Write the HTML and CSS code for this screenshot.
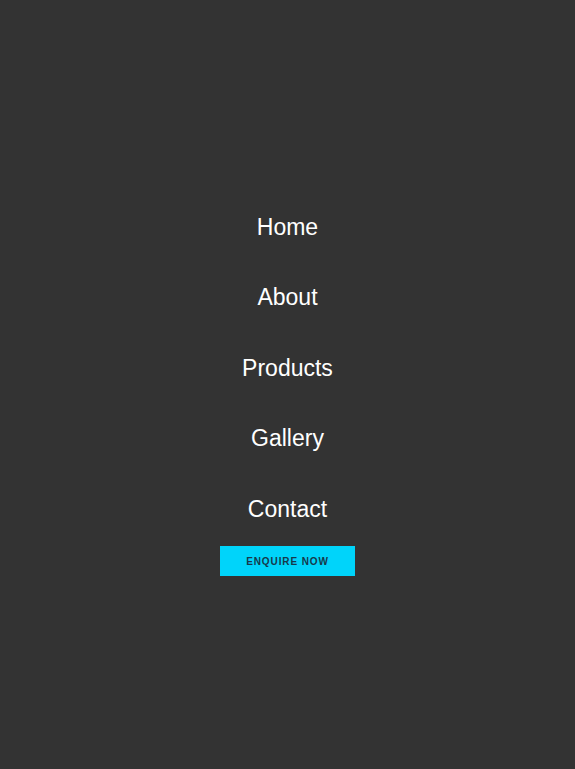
FILE: index.html
```html
<!DOCTYPE html>
<html lang="en">
<head>
<meta charset="utf-8">
<title>Menu</title>
<link rel="stylesheet" href="styles.css">
</head>
<body>
<nav class="menu">
  <a class="menu-link" href="#">Home</a>
  <a class="menu-link" href="#">About</a>
  <a class="menu-link" href="#">Products</a>
  <a class="menu-link" href="#">Gallery</a>
  <a class="menu-link" href="#">Contact</a>
  <a class="enquire" href="#">ENQUIRE NOW</a>
</nav>
</body>
</html>
```
FILE: styles.css
```css
html, body {
  margin: 0;
  padding: 0;
  background: #333333;
}
body {
  font-family: "Liberation Sans", Arial, sans-serif;
}
.menu {
  min-height: 100vh;
  display: flex;
  flex-direction: column;
  align-items: center;
  justify-content: center;
  box-sizing: border-box;
  padding-bottom: 1px;
}
.menu-link {
  display: block;
  color: #ffffff;
  text-decoration: none;
  font-size: 23px;
  line-height: 30.5px;
  padding: 20px 0;
  text-align: center;
}
.enquire {
  display: flex;
  align-items: center;
  justify-content: center;
  margin-top: 2px;
  width: 135px;
  height: 30px;
  background: #00d4fa;
  color: #17394a;
  font-size: 10px;
  font-weight: bold;
  letter-spacing: 0.9px;
  text-decoration: none;
}
```
